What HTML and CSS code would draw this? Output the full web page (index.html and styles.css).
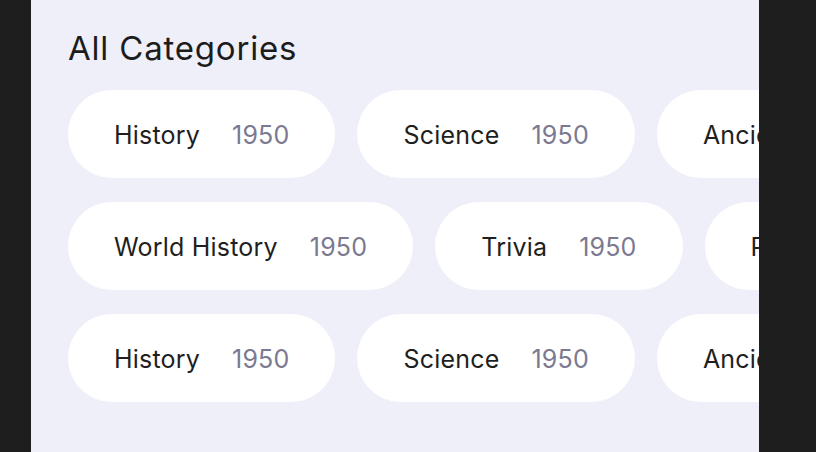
FILE: index.html
```html
<!DOCTYPE html>
<html lang="en">
<head>
    <meta charset="UTF-8">
    <meta name="viewport" content="width=device-width, initial-scale=1.0">
    <title>All Categories</title>
    <link rel="stylesheet" href="styles.css">
</head>
<body>
    <!-- Painel de categorias -->
    <div class="panel">
        <h2 class="title">All Categories</h2>

        <div class="row">
            <div class="pill"><span class="name">History</span><span class="count">1950</span></div>
            <div class="pill"><span class="name">Science</span><span class="count">1950</span></div>
            <div class="pill"><span class="name">Ancient History</span><span class="count">1950</span></div>
        </div>

        <div class="row">
            <div class="pill"><span class="name">World History</span><span class="count">1950</span></div>
            <div class="pill"><span class="name">Trivia</span><span class="count">1950</span></div>
            <div class="pill"><span class="name">Religion</span><span class="count">1950</span></div>
        </div>

        <div class="row">
            <div class="pill"><span class="name">History</span><span class="count">1950</span></div>
            <div class="pill"><span class="name">Science</span><span class="count">1950</span></div>
            <div class="pill"><span class="name">Ancient History</span><span class="count">1950</span></div>
        </div>
    </div>
</body>
</html>
```

FILE: styles.css
```css
/* Fundo escuro da página */
body {
    margin: 0;
    background-color: #1e1e1e;
    font-family: Inter, "Noto Sans", sans-serif;
    height: 100vh;
    overflow: hidden;
}

/* Painel claro com as categorias */
.panel {
    margin-left: 31px;
    width: 728px;
    height: 452px;
    background-color: #efeff9;
    padding: 26px 0 0 37px;
    box-sizing: border-box;
    overflow: hidden;
}

.title {
    margin: 0 0 20px 0;
    font-size: 33px;
    font-weight: 400;
    line-height: 44px;
    letter-spacing: 0.8px;
    color: #1c1c1c;
}

/* Linha de pílulas */
.row {
    display: flex;
    gap: 22px;
    margin-bottom: 24px;
}

.pill {
    flex-shrink: 0;
    display: flex;
    align-items: center;
    gap: 32px;
    height: 88px;
    padding: 2px 46px 0;
    box-sizing: border-box;
    background: white;
    border-radius: 44px;
    font-size: 25px;
    letter-spacing: 0.2px;
    white-space: nowrap;
}

.name {
    color: #1f1f1f;
}

.count {
    color: #7b7990;
}
```
